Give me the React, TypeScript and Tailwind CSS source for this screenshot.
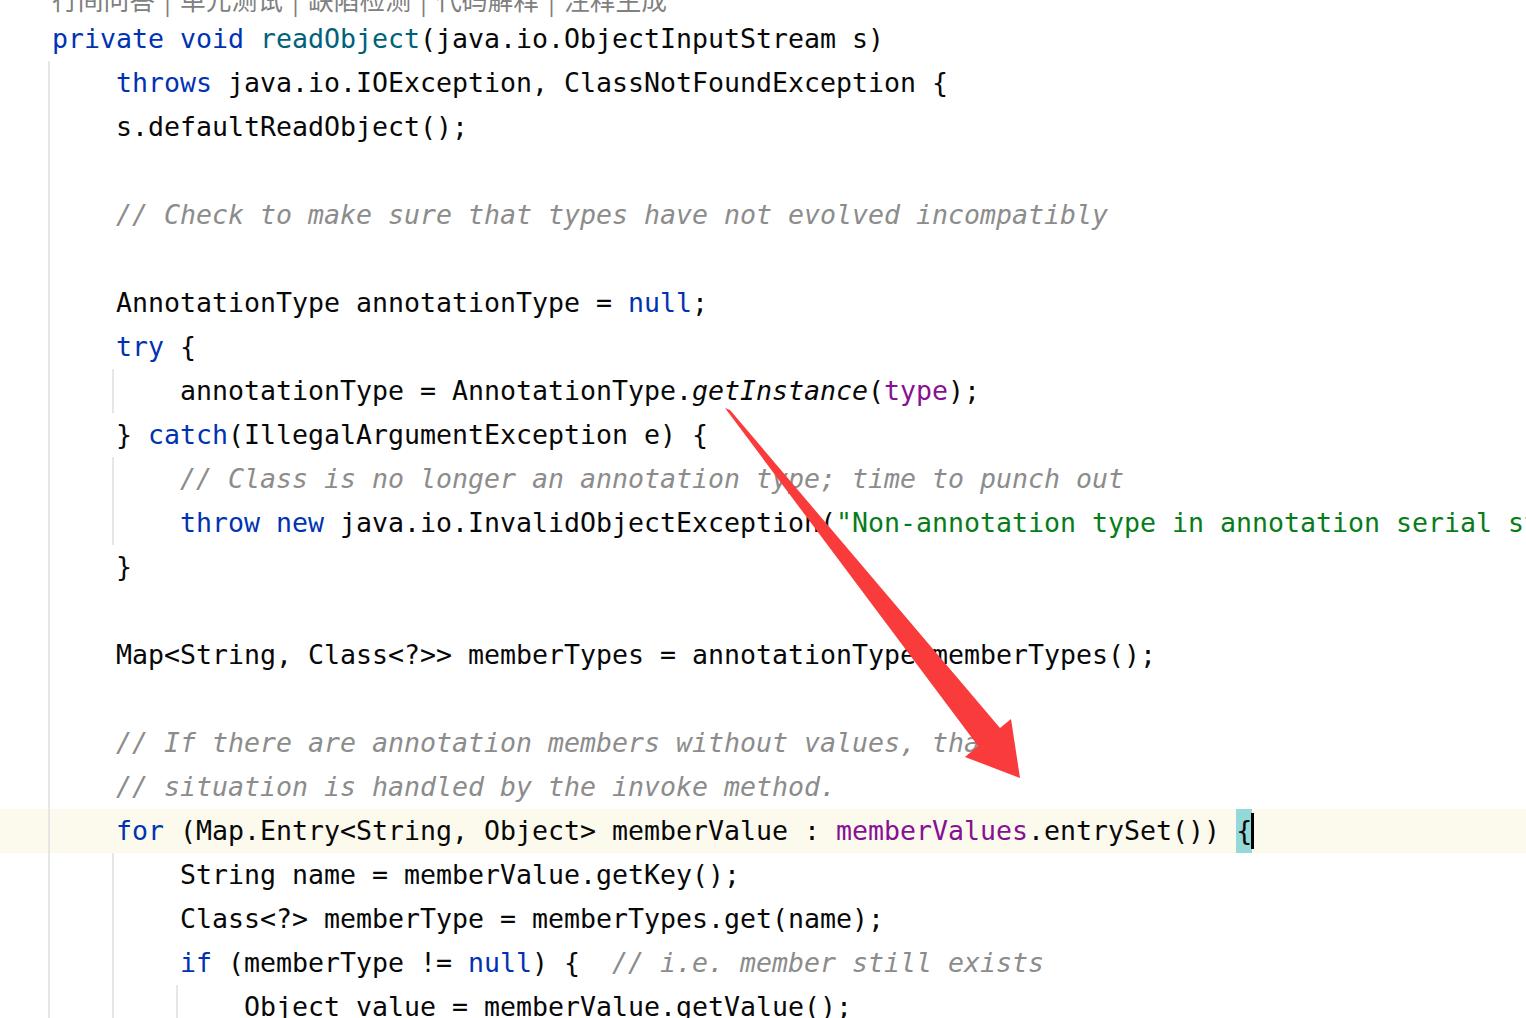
import React from "react";

type Seg = [string, string];
const D = "text-[#080808]";
const K = "text-[#0033b3]";
const M = "text-[#00627a]";
const C = "text-[#8c8c8c] italic";
const S = "text-[#067d17]";
const P = "text-[#871094]";
const I = "text-[#080808] italic";

type Line = { ind: number; guides: number; segs: Seg[]; hl?: boolean; caret?: boolean };

const lines: Line[] = [
  { ind: 0, guides: 0, segs: [[K, "private void "], [M, "readObject"], [D, "(java.io.ObjectInputStream s)"]] },
  { ind: 1, guides: 1, segs: [[K, "throws "], [D, "java.io.IOException, ClassNotFoundException {"]] },
  { ind: 1, guides: 1, segs: [[D, "s.defaultReadObject();"]] },
  { ind: 1, guides: 1, segs: [] },
  { ind: 1, guides: 1, segs: [[C, "// Check to make sure that types have not evolved incompatibly"]] },
  { ind: 1, guides: 1, segs: [] },
  { ind: 1, guides: 1, segs: [[D, "AnnotationType annotationType = "], [K, "null"], [D, ";"]] },
  { ind: 1, guides: 1, segs: [[K, "try "], [D, "{"]] },
  { ind: 2, guides: 2, segs: [[D, "annotationType = AnnotationType."], [I, "getInstance"], [D, "("], [P, "type"], [D, ");"]] },
  { ind: 1, guides: 1, segs: [[D, "} "], [K, "catch"], [D, "(IllegalArgumentException e) {"]] },
  { ind: 2, guides: 2, segs: [[C, "// Class is no longer an annotation type; time to punch out"]] },
  { ind: 2, guides: 2, segs: [[K, "throw new "], [D, "java.io.InvalidObjectException("], [S, "\"Non-annotation type in annotation serial stream\""], [D, ");"]] },
  { ind: 1, guides: 1, segs: [[D, "}"]] },
  { ind: 1, guides: 1, segs: [] },
  { ind: 1, guides: 1, segs: [[D, "Map<String, Class<?>> memberTypes = annotationType.memberTypes();"]] },
  { ind: 1, guides: 1, segs: [] },
  { ind: 1, guides: 1, segs: [[C, "// If there are annotation members without values, that"]] },
  { ind: 1, guides: 1, segs: [[C, "// situation is handled by the invoke method."]] },
  { ind: 1, guides: 1, hl: true, caret: true, segs: [[K, "for "], [D, "(Map.Entry<String, Object> memberValue : "], [P, "memberValues"], [D, ".entrySet()) "]] },
  { ind: 2, guides: 2, segs: [[D, "String name = memberValue.getKey();"]] },
  { ind: 2, guides: 2, segs: [[D, "Class<?> memberType = memberTypes.get(name);"]] },
  { ind: 2, guides: 2, segs: [[K, "if "], [D, "(memberType != "], [K, "null"], [D, ") {  "], [C, "// i.e. member still exists"]] },
  { ind: 3, guides: 3, segs: [[D, "Object value = memberValue.getValue();"]] },
];

const hints = ["行间问答", "单元测试", "缺陷检测", "代码解释", "注释生成"];

function CodeLine({ line }: { line: Line }) {
  const n = Math.max(line.ind, line.guides);
  return (
    <div
      className={
        line.hl
          ? "flex h-[44px] shrink-0 items-center bg-[#fcfaed] pl-[48px]"
          : "flex h-[44px] shrink-0 items-center pl-[48px]"
      }
    >
      {Array.from({ length: n }).map((_, j) => (
        <span
          key={j}
          className={
            j < line.guides
              ? "h-full w-[64px] shrink-0 border-l-2 border-[#e6e6e6]"
              : "h-full w-[64px] shrink-0 border-l-2 border-transparent"
          }
        />
      ))}
      <span className="w-[4px] shrink-0" />
      <span className="flex h-full items-center whitespace-pre">
        {line.segs.map(([cls, t], k) => (
          <span key={k} className={cls}>
            {t}
          </span>
        ))}
        {line.caret && (
          <>
            <span className="flex h-full items-center bg-[#93d9d9] text-[#080808]">{"{"}</span>
            <span className="-ml-[1px] h-[36px] w-[3px] bg-black" />
          </>
        )}
      </span>
    </div>
  );
}

export default function App() {
  return (
    <div className="relative h-[1018px] w-[1526px] overflow-hidden bg-white">
      <div className="h-[17px] overflow-hidden pl-[52px]">
        <div className="-mt-[20px] flex whitespace-pre font-['Noto_Sans_CJK_SC',sans-serif] text-[25.75px] leading-[37px] text-[#808080]">
          {hints.map((h, i) => (
            <React.Fragment key={h}>
              {i > 0 && <span className="inline-block w-[25px] text-center">|</span>}
              <span>{h}</span>
            </React.Fragment>
          ))}
        </div>
      </div>
      <div className="flex flex-col font-['DejaVu_Sans_Mono',monospace] text-[26.58px] leading-[44px]">
        {lines.map((l, i) => (
          <CodeLine key={i} line={l} />
        ))}
      </div>
      <svg
        className="pointer-events-none absolute left-0 top-0"
        width="1526"
        height="1018"
        viewBox="0 0 1526 1018"
      >
        <polygon
          points="725,408 730,410 1000,728 1011,719 1020,778 965,757 978,746"
          fill="#f93b3b"
        />
      </svg>
    </div>
  );
}
